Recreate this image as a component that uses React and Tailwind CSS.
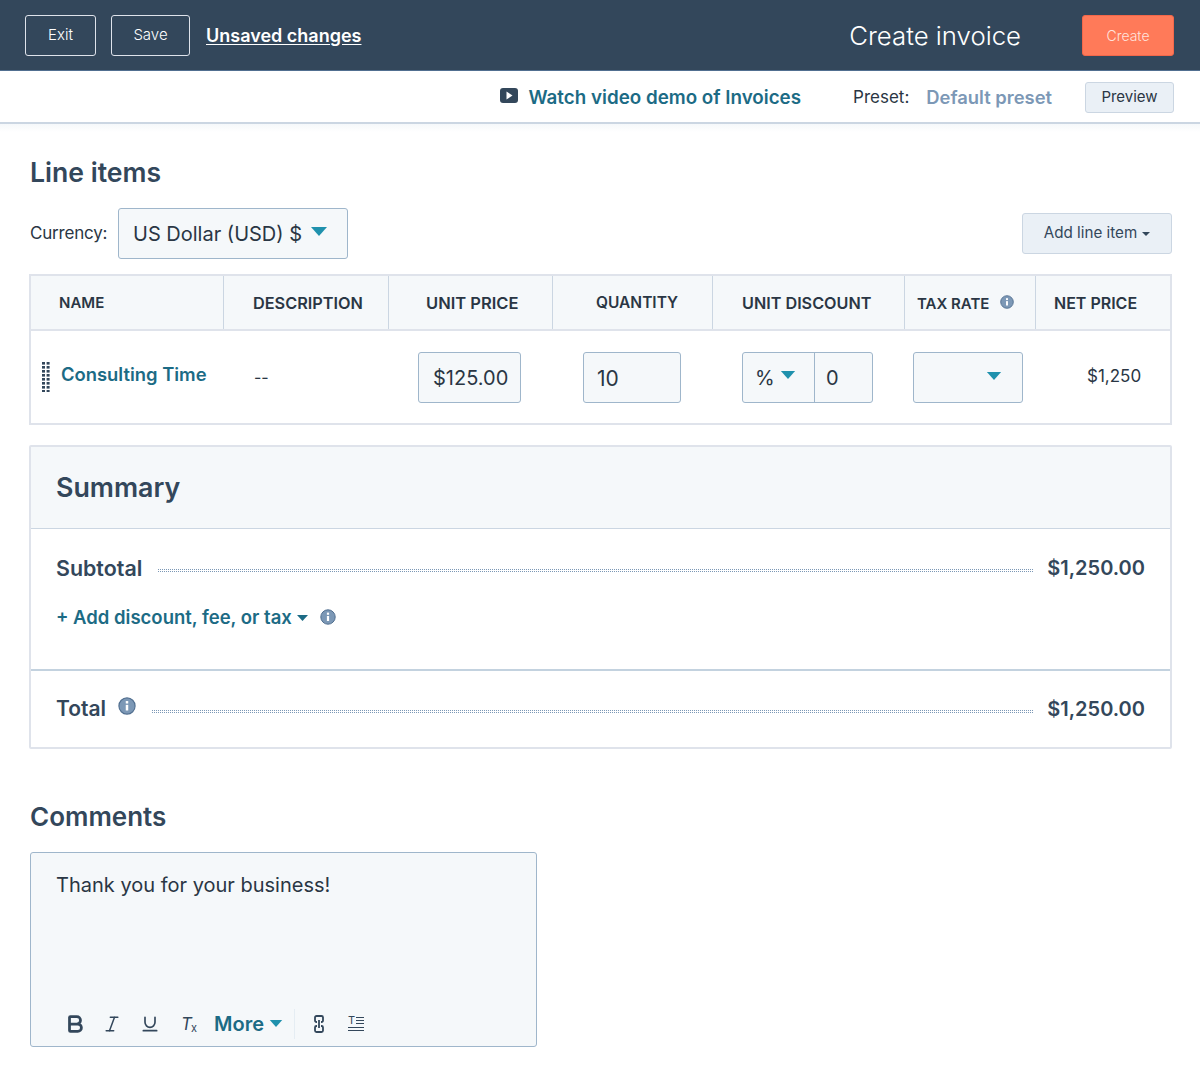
import React from "react";
import { Bold, Italic, Underline } from "lucide-react";

const Caret = ({ className = "" }) => (
  <svg viewBox="0 0 16 9" className={className}>
    <path d="M0 0h16L8 9z" fill="#1f91ad" />
  </svg>
);

const Info = ({ size = 16 }) => (
  <svg viewBox="0 0 16 16" width={size} height={size} className="shrink-0">
    <circle cx="8" cy="8" r="7.2" fill="#7c98b6" stroke="#516f90" strokeWidth="1" />
    <rect x="6.9" y="7" width="2.2" height="5" fill="#fff" />
    <rect x="6.9" y="3.6" width="2.2" height="2.2" fill="#fff" />
  </svg>
);

const Th = ({ className = "", children }) => (
  <div className={`flex items-center pt-[1px] font-semibold text-[#2a3644] border-r border-[#cbd6e2] last:border-r-0 ${className}`}>
    {children}
  </div>
);

const Leader = () => <div className="flex-1 h-[3px] border-y border-dotted border-[#7c98b6]" />;

export default function App() {
  return (
    <div className="w-[1200px] h-[1075px] bg-white overflow-hidden font-['Inter',sans-serif] text-[#33475b]">
      {/* Top bar */}
      <header className="h-[71px] bg-[#33475b] flex items-center pl-[25px] pr-[26px] border-b border-[#516f90]">
        <button className="w-[71px] h-[41px] pt-[1px] rounded-[3px] border border-[#dfe3eb] text-[15px] font-light text-white">Exit</button>
        <button className="w-[79px] h-[41px] pt-[1px] ml-[15px] rounded-[3px] border border-[#dfe3eb] text-[15px] font-light text-white">Save</button>
        <span className="ml-[16px] pt-[1px] text-[18px] font-semibold text-white underline underline-offset-2">Unsaved changes</span>
        <h1 className="ml-auto mr-[61px] pt-[3px] text-[25.75px] font-light text-white">Create invoice</h1>
        <button className="w-[92px] h-[41px] pt-[1px] rounded-[3px] bg-[#ff7a59] border border-[#f2674a] text-[14px] font-light text-[#ffe3dc]">Create</button>
      </header>

      {/* Sub bar */}
      <div className="h-[53px] pt-[2px] flex items-center justify-end pr-[26px] border-b-2 border-[#cbd6e2]">
        <svg viewBox="0 0 18 15" width="18" height="15" className="mr-[10px] -mt-[4px]">
          <rect width="18" height="15" rx="3" fill="#33475b" />
          <path d="M6.5 3.5v8l6-4z" fill="#fff" />
        </svg>
        <a className="mt-[1px] text-[18.8px] font-semibold text-[#1c6b85]">Watch video demo of Invoices</a>
        <span className="ml-[52px] text-[17px] text-[#2a3644]">Preset:</span>
        <a className="ml-[17px] text-[18.4px] font-semibold text-[#7c98b6]">Default preset</a>
        <button className="ml-[33px] w-[89px] h-[31px] rounded-[3px] bg-[#eaf0f6] border border-[#cbd6e2] text-[15px] text-[#2a3644]">Preview</button>
      </div>
      <div className="h-[8px] bg-gradient-to-b from-[#f5f8fa] to-white" />

      <main className="pl-[30px] pr-[28px]">
        {/* Line items */}
        <h2 className="mt-[24px] text-[26.6px] leading-[32px] font-semibold">Line items</h2>
        <div className="mt-[20px] flex items-center">
          <span className="w-[88px] pt-[1px] text-[17px] tracking-[-0.2px] text-[#2a3644]">Currency:</span>
          <div className="w-[230px] h-[51px] rounded-[3px] border border-[#9fb6cb] bg-[#f5f8fa] flex items-center pl-[14px] text-[20px] text-[#2a3644]">
            US Dollar (USD) $
            <Caret className="w-[16px] h-[9px] ml-[9px] -mt-[4px]" />
          </div>
          <button className="ml-auto w-[150px] h-[41px] -mt-[1px] pt-[1px] rounded-[3px] border border-[#cbd6e2] bg-[#eaf0f6] flex items-center justify-center text-[15.2px] text-[#33475b]">
            Add line item
            <svg viewBox="0 0 8 4" className="w-[8px] h-[4px] ml-[5px]"><path d="M0 0h8L4 4z" fill="#33475b" /></svg>
          </button>
        </div>

        {/* Table */}
        <div className="mt-[15px] -ml-[1px] border-2 border-[#dfe3eb]">
          <div className="h-[55px] bg-[#f5f8fa] border-b-2 border-[#dfe3eb] grid grid-cols-[193px_165px_164px_160px_192px_131px_1fr]">
            <Th className="pl-[28px] text-[15px]">NAME</Th>
            <Th className="pl-[29px] text-[16.3px]">DESCRIPTION</Th>
            <Th className="pl-[37px] text-[16.5px]">UNIT PRICE</Th>
            <Th className="pl-[43px] text-[15.5px]">QUANTITY</Th>
            <Th className="pl-[29px] text-[16.2px]">UNIT DISCOUNT</Th>
            <Th className="pl-[12px] text-[15px]">
              <span className="mt-[2px]">TAX RATE</span>
              <span className="ml-[11px] -mt-[2px]"><Info size={14} /></span>
            </Th>
            <Th className="pl-[18px] text-[16px]">NET PRICE</Th>
          </div>
          <div className="h-[92px] grid grid-cols-[193px_165px_164px_160px_192px_131px_1fr] items-center text-[#2a3644]">
            <div className="flex items-center pl-[11px]">
              <svg viewBox="0 0 8 30" width="8" height="30" className="shrink-0">
                {[0, 1, 2, 3, 4, 5, 6, 7].map((i) => (
                  <g key={i} fill="#33475b">
                    <rect x="0" y={i * 4} width="3" height="2.6" />
                    <rect x="4.6" y={i * 4} width="3" height="2.6" />
                  </g>
                ))}
              </svg>
              <span className="ml-[11px] -mt-[4px] text-[18.4px] font-semibold text-[#1c6b85] whitespace-nowrap">Consulting Time</span>
            </div>
            <div className="pl-[30px] text-[16px] -mt-[1px]">--</div>
            <div className="pl-[29px]">
              <div className="w-[103px] h-[51px] pt-[2px] rounded-[3px] border border-[#9fb6cb] bg-[#f5f8fa] flex items-center pl-[14px] text-[20px]">$125.00</div>
            </div>
            <div className="pl-[30px]">
              <div className="w-[98px] h-[51px] pt-[3px] rounded-[3px] border border-[#9fb6cb] bg-[#f5f8fa] flex items-center pl-[13px] text-[21px]">10</div>
            </div>
            <div className="pl-[29px]">
              <div className="w-[131px] h-[51px] rounded-[3px] border border-[#9fb6cb] bg-[#f5f8fa] flex items-center text-[20px]">
                <div className="w-[72px] h-full pt-[2px] flex items-center pl-[12px] border-r border-[#9fb6cb]">
                  %
                  <Caret className="w-[16px] h-[8px] ml-[5px] -mt-[6px]" />
                </div>
                <div className="pl-[11px] pt-[2px]">0</div>
              </div>
            </div>
            <div className="pl-[8px]">
              <div className="w-[110px] h-[51px] rounded-[3px] border border-[#9fb6cb] bg-[#f5f8fa] flex items-center justify-end pr-[20px]">
                <Caret className="w-[16px] h-[8px] -mt-[2px]" />
              </div>
            </div>
            <div className="pl-[51px] text-[17px]">$1,250</div>
          </div>
        </div>

        {/* Summary */}
        <section className="mt-[20px] -ml-[1px] h-[304px] border-2 border-[#dfe3eb] rounded-[2px] flex flex-col">
          <div className="h-[82px] bg-[#f5f8fa] border-b border-[#cbd6e2] flex items-center pl-[25px] text-[26.8px] font-semibold">Summary</div>
          <div className="h-[142px] border-b-2 border-[#c3d2df] pl-[25px] pr-[25px]">
            <div className="mt-[24px] flex items-center text-[20px] font-semibold h-[30px]">
              <span className="text-[21.4px]">Subtotal</span>
              <div className="flex-1 ml-[16px] mr-[14px] mt-[5px]"><Leader /></div>
              <span>$1,250.00</span>
            </div>
            <div className="mt-[21px] flex items-center h-[28px] text-[18.5px] font-semibold text-[#1c6b85]">
              + Add discount, fee, or tax
              <svg viewBox="0 0 11 6" className="w-[11px] h-[6px] ml-[5px]"><path d="M0 0h11L5.5 6z" fill="#1c6b85" /></svg>
              <span className="ml-[12px] -mt-[3px]"><Info size={16} /></span>
            </div>
          </div>
          <div className="flex-1 pl-[25px] pr-[25px] flex items-center text-[20px] font-semibold">
            <span className="text-[21px]">Total</span>
            <span className="ml-[12px] -mt-[6px]"><Info size={18} /></span>
            <div className="flex-1 ml-[16px] mr-[14px] mt-[5px]"><Leader /></div>
            <span>$1,250.00</span>
          </div>
        </section>

        {/* Comments */}
        <h2 className="mt-[52px] text-[26px] leading-[32px] font-semibold">Comments</h2>
        <div className="mt-[19px] w-[507px] h-[195px] rounded-[3px] border border-[#9fb6cb] bg-[#f5f8fa] flex flex-col pl-[25px]">
          <p className="mt-[19px] text-[20px] leading-[26px] text-[#2a3644]">Thank you for your business!</p>
          <div className="mt-auto mb-[7px] h-[30px] flex items-center">
            <Bold size={22} strokeWidth={3} className="ml-[8px]" />
            <Italic size={20} strokeWidth={1.8} className="ml-[16px]" />
            <Underline size={20} strokeWidth={2} className="ml-[18px]" />
            <span className="ml-[21px] w-[14px] flex items-end">
              <span className="text-[17px] italic leading-[20px] -mr-[1px]">T</span>
              <span className="text-[11px] leading-[11px]">x</span>
            </span>
            <span className="ml-[19px] text-[20px] font-semibold text-[#1c6b85]">More</span>
            <Caret className="w-[14px] h-[7px] ml-[5px] -mt-[2px]" />
            <div className="ml-[11px] w-px h-[30px] bg-[#e5edf3]" />
            <svg viewBox="0 0 10 18" width="10" height="18" className="ml-[19px]" fill="none" stroke="#33475b" strokeWidth="1.8">
              <path d="M3 7H2.500A1.500 1.500 0 0 1 1 5.500V2.500A1.500 1.500 0 0 1 2.500 1h5A1.500 1.500 0 0 1 9 2.500v3A1.500 1.500 0 0 1 7.500 7H7" />
              <path d="M3 11H2.500A1.500 1.500 0 0 0 1 12.500v3A1.500 1.500 0 0 0 2.500 17h5A1.500 1.500 0 0 0 9 15.500v-3A1.500 1.500 0 0 0 7.500 11H7" />
              <path d="M5 5v8" />
            </svg>
            <div className="ml-[24px] w-[16px] relative h-[16px]">
              <span className="absolute -top-[2px] left-0 text-[11px] leading-[12px]">T</span>
              <div className="absolute right-0 top-[1px] w-[8px] h-px bg-[#33475b]" />
              <div className="absolute right-0 top-[4px] w-[8px] h-px bg-[#33475b]" />
              <div className="absolute right-0 top-[7px] w-[8px] h-px bg-[#33475b]" />
              <div className="absolute left-0 top-[11px] w-full h-px bg-[#33475b]" />
              <div className="absolute left-0 top-[14px] w-full h-px bg-[#33475b]" />
            </div>
          </div>
        </div>
      </main>
    </div>
  );
}
